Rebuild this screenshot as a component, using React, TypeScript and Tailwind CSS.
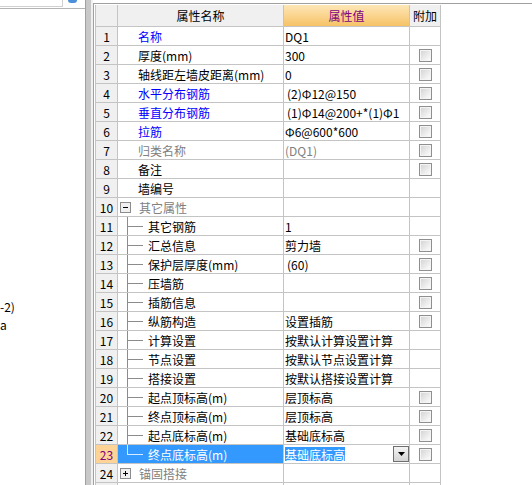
import React from 'react';

type Row = {
  no: number;
  name: string;
  value?: string;
  tone?: 'blue' | 'gray';
  valueGray?: boolean;
  check?: boolean;
  child?: boolean;
  last?: boolean;
  group?: 'open' | 'closed';
  selected?: boolean;
  inset?: boolean;
};

const rows: Row[] = [
  { no: 1, name: '名称', value: 'DQ1', tone: 'blue' },
  { no: 2, name: '厚度(mm)', value: '300', check: true },
  { no: 3, name: '轴线距左墙皮距离(mm)', value: '0', check: true },
  { no: 4, name: '水平分布钢筋', value: '(2)Φ12@150', tone: 'blue', check: true, inset: true },
  { no: 5, name: '垂直分布钢筋', value: '(1)Φ14@200+*(1)Φ1', tone: 'blue', check: true, inset: true },
  { no: 6, name: '拉筋', value: 'Φ6@600*600', tone: 'blue', check: true },
  { no: 7, name: '归类名称', value: '(DQ1)', tone: 'gray', valueGray: true, check: true },
  { no: 8, name: '备注', check: true },
  { no: 9, name: '墙编号' },
  { no: 10, name: '其它属性', tone: 'gray', group: 'open' },
  { no: 11, name: '其它钢筋', value: '1', child: true },
  { no: 12, name: '汇总信息', value: '剪力墙', child: true, check: true },
  { no: 13, name: '保护层厚度(mm)', value: '(60)', child: true, check: true, inset: true },
  { no: 14, name: '压墙筋', child: true, check: true },
  { no: 15, name: '插筋信息', child: true, check: true },
  { no: 16, name: '纵筋构造', value: '设置插筋', child: true, check: true },
  { no: 17, name: '计算设置', value: '按默认计算设置计算', child: true },
  { no: 18, name: '节点设置', value: '按默认节点设置计算', child: true },
  { no: 19, name: '搭接设置', value: '按默认搭接设置计算', child: true },
  { no: 20, name: '起点顶标高(m)', value: '层顶标高', child: true, check: true },
  { no: 21, name: '终点顶标高(m)', value: '层顶标高', child: true, check: true },
  { no: 22, name: '起点底标高(m)', value: '基础底标高', child: true, check: true },
  { no: 23, name: '终点底标高(m)', value: '基础底标高', child: true, check: true, last: true, selected: true },
  { no: 24, name: '锚固搭接', tone: 'gray', group: 'closed' },
];

function Checkbox() {
  return (
    <div className="w-[13px] h-[13px] border border-[#8f8f8f] bg-[#f4f4f4] p-px">
      <div className="w-full h-full bg-gradient-to-br from-[#d6d6d6] to-[#fbfbfb]" />
    </div>
  );
}

function ExpandBox({ open }: { open: boolean }) {
  return (
    <div className="relative w-[11px] h-[11px] border border-[#8c8c8c] bg-[#f0f0f0]">
      <div className="absolute left-[2px] top-[4px] w-[5px] h-px bg-black" />
      {!open && <div className="absolute left-[4px] top-[2px] w-px h-[5px] bg-black" />}
    </div>
  );
}

function PropertyRow({ row }: { row: Row }) {
  const nameColor = row.selected
    ? 'text-white'
    : row.tone === 'blue'
      ? 'text-[#0000ff]'
      : row.tone === 'gray'
        ? 'text-[#808080]'
        : 'text-black';
  const lineColor = row.selected ? 'bg-[#d6ebff]' : 'bg-[#8c8c8c]';

  return (
    <div className="flex h-[19px]">
      {/* row number */}
      <div
        className={`w-[22px] shrink-0 border-r border-b border-[#c4c4c4] flex items-center justify-center pt-px ${
          row.selected ? 'bg-[#fdd396] text-[#800080]' : 'bg-[#f0f0f0] text-black'
        }`}
      >
        {row.no}
      </div>

      {/* name */}
      <div
        className={`relative w-[166px] shrink-0 border-r border-b border-[#c4c4c4] flex items-center pt-px whitespace-nowrap overflow-hidden ${
          row.selected ? 'bg-[#3399ff]' : 'bg-white'
        } ${nameColor}`}
      >
        {row.child && (
          <>
            <span className={`absolute left-[9px] top-0 w-px ${row.last ? 'h-[10px]' : 'h-full'} ${lineColor}`} />
            <span className={`absolute left-[9px] top-[9px] w-[16px] h-px ${lineColor}`} />
          </>
        )}
        {row.group ? (
          <div className="flex items-center pl-[2px] gap-[8px]">
            <ExpandBox open={row.group === 'open'} />
            <span>{row.name}</span>
          </div>
        ) : (
          <span className={row.child ? 'pl-[30px]' : 'pl-[20px]'}>{row.name}</span>
        )}
      </div>

      {/* value */}
      <div
        className={`w-[126px] shrink-0 border-r border-b border-[#c4c4c4] bg-white flex items-center whitespace-nowrap overflow-hidden ${
          row.inset ? 'pl-[3px]' : 'pl-[1px]'
        } ${row.valueGray ? 'text-[#808080]' : 'text-black'}`}
      >
        {row.selected ? (
          <>
            <span className="bg-[#3399ff] text-white leading-[13px] pt-px">{row.value}</span>
            <div className="ml-auto w-[16px] h-[16px] border border-[#6f6f6f] bg-gradient-to-b from-[#f4f4f4] to-[#d4d4d4] flex items-center justify-center">
              <svg width="7" height="4" viewBox="0 0 7 4">
                <polygon points="0,0 7,0 3.5,4" fill="#000" />
              </svg>
            </div>
          </>
        ) : (
          <span className="pt-px">{row.value}</span>
        )}
      </div>

      {/* attach */}
      <div className="w-[31px] shrink-0 border-r border-b border-[#c4c4c4] bg-white flex items-center justify-center pl-px">
        {row.check && <Checkbox />}
      </div>
    </div>
  );
}

export default function App() {
  return (
    <div className="flex w-[532px] h-[485px] overflow-hidden bg-white text-[12px] leading-none font-['Noto_Sans_CJK_SC','Liberation_Sans',sans-serif] text-black">
      {/* left tree panel */}
      <div className="w-[85px] shrink-0 bg-white flex flex-col">
        <div className="flex h-[9px] border-b border-[#b4b4b4]">
          <div className="w-[63px] h-[7px] border-r border-b border-[#d0d0d0]" />
          <div className="ml-[5px] w-[9px] h-[3px] rounded-b-sm bg-[#4a8fd8]" />
        </div>
        <div className="pt-[289px] leading-[18px] whitespace-nowrap overflow-hidden">
          <div>-2)</div>
          <div>a</div>
        </div>
      </div>

      {/* splitter */}
      <div className="flex shrink-0">
        <div className="w-px bg-[#a0a0a0]" />
        <div className="w-[5px] bg-[#c8c8c8]" />
        <div className="w-[2px] bg-[#f0f0f0]" />
      </div>

      {/* property grid */}
      <div className="flex-1 mt-[3px] border-t border-l border-[#a0a0a0] pt-px pl-px bg-white">
        <div className="w-[347px] border-l border-[#c4c4c4]">
          <div className="flex h-[22px]">
            <div className="w-[22px] shrink-0 border-r border-b border-[#c4c4c4] bg-[#f0f0f0]" />
            <div className="w-[166px] shrink-0 border-r border-b border-[#c4c4c4] bg-[#f0f0f0] flex items-center justify-center pt-px">
              属性名称
            </div>
            <div className="w-[126px] shrink-0 border-r border-b border-[#c4c4c4] bg-gradient-to-b from-[#fde7b6] to-[#f6c264] text-[#800080] flex items-center justify-center pt-px">
              属性值
            </div>
            <div className="w-[31px] shrink-0 border-r border-b border-[#c4c4c4] bg-[#f0f0f0] flex items-center justify-center pt-px">
              附加
            </div>
          </div>
          {rows.map((row) => (
            <PropertyRow key={row.no} row={row} />
          ))}
          <div className="flex h-[19px]">
            <div className="w-[22px] shrink-0 border-r border-[#c4c4c4] bg-[#f0f0f0]" />
            <div className="w-[166px] shrink-0 border-r border-[#c4c4c4]" />
            <div className="w-[126px] shrink-0 border-r border-[#c4c4c4]" />
            <div className="w-[31px] shrink-0 border-r border-[#c4c4c4]" />
          </div>
        </div>
      </div>
    </div>
  );
}
